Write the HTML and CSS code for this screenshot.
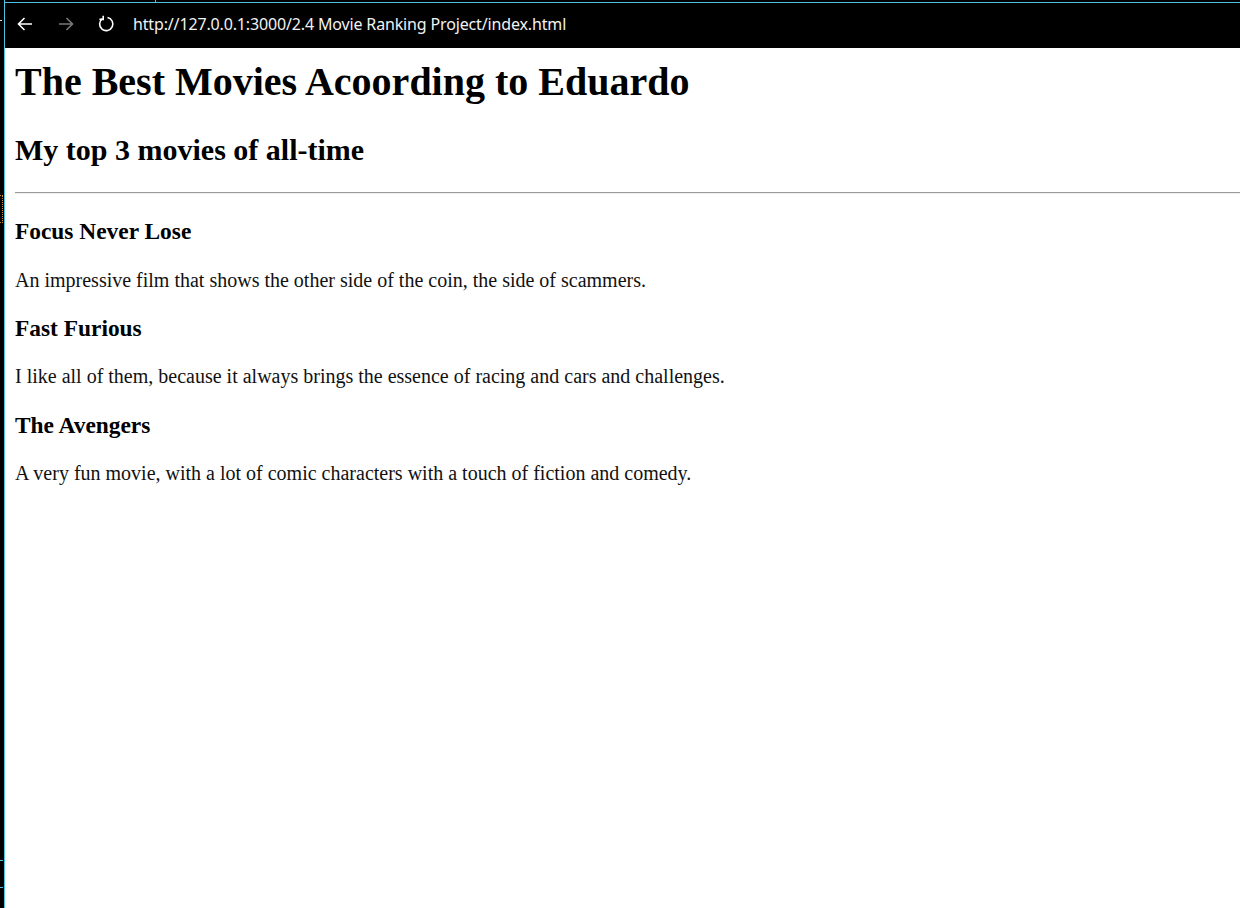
FILE: index.html
```html
<!DOCTYPE html>
<html>
<head>
<meta charset="utf-8">
<title>Movie Ranking</title>
<link rel="stylesheet" href="styles.css">
</head>
<body>
<div class="frame">
  <div class="edge">
    <span class="tick tick-a"></span>
    <span class="dotbox"></span>
    <span class="tick tick-b"></span>
    <span class="tick tick-c"></span>
  </div>
  <div class="window">
    <div class="toolbar">
      <div class="top-strip"><span class="top-mark"></span></div>
      <div class="bar">
        <svg class="icon back" width="18" height="18" viewBox="0 0 18 18"><path d="M16 9H2.5M8.5 3L2.5 9l6 6" fill="none" stroke="#fff" stroke-width="1.6"/></svg>
        <svg class="icon fwd" width="18" height="18" viewBox="0 0 18 18"><path d="M2 9h13.5M9.5 3l6 6-6 6" fill="none" stroke="#7a7a7a" stroke-width="1.6"/></svg>
        <svg class="icon reload" width="18" height="18" viewBox="0 0 18 18"><path d="M5.4 3.6A6.6 6.6 0 1 0 10.5 2.5" fill="none" stroke="#fff" stroke-width="1.6"/><path d="M6.2 0.8v3.6H2.4" fill="none" stroke="#fff" stroke-width="1.6"/></svg>
        <span class="url">http://127.0.0.1:3000/2.4 Movie Ranking Project/index.html</span>
      </div>
    </div>
    <div class="page">
      <h1 class="title">The Best Movies Acoording to Eduardo</h1>
      <h2 class="subtitle">My top 3 movies of all-time</h2>
      <hr class="rule">
      <h3 class="movie">Focus Never Lose</h3>
      <p class="desc">An impressive film that shows the other side of the coin, the side of scammers.</p>
      <h3 class="movie">Fast Furious</h3>
      <p class="desc">I like all of them, because it always brings the essence of racing and cars and challenges.</p>
      <h3 class="movie">The Avengers</h3>
      <p class="desc">A very fun movie, with a lot of comic characters with a touch of fiction and comedy.</p>
    </div>
  </div>
</div>
</body>
</html>
```

FILE: styles.css
```css
html, body {
  margin: 0;
  padding: 0;
  background: #fff;
  width: 1240px;
  height: 908px;
  overflow: hidden;
}

.frame {
  display: flex;
  width: 1240px;
  height: 908px;
}

.edge {
  position: relative;
  width: 4px;
  flex: none;
  background: #000;
  border-right: 1px solid #4cc2e6;
}

.tick {
  position: absolute;
  left: 0;
  width: 3px;
  height: 1px;
  background: #4cc2e6;
}
.tick-a { top: 20px; background: #ddd; width: 2px; }
.tick-b { top: 860px; }
.tick-c { top: 887px; }

.dotbox {
  position: absolute;
  left: 0;
  top: 195px;
  width: 2px;
  height: 26px;
  border: 1px dotted #d98a2a;
  border-left: none;
}

.window {
  flex: 1;
  display: flex;
  flex-direction: column;
  min-width: 0;
}

.toolbar {
  background: #000;
  height: 48px;
  flex: none;
}

.top-strip {
  position: relative;
  height: 2px;
  border-bottom: 1px solid #4cc2e6;
}

.top-mark {
  position: absolute;
  left: 150px;
  top: 0;
  width: 1px;
  height: 2px;
  background: #4cc2e6;
}

.bar {
  display: flex;
  align-items: center;
  height: 44px;
  padding-left: 11px;
}

.icon { flex: none; display: block; }
.back { margin-right: 23px; margin-top: -2px; }
.fwd { margin-right: 22px; margin-top: -2px; }
.reload { margin-right: 18px; margin-top: -2px; }

.url {
  font-family: "Noto Sans", "Open Sans", sans-serif;
  font-size: 16px;
  color: #f2f2f2;
  white-space: nowrap;
  letter-spacing: -0.15px;
  margin-top: -3px;
}

.page {
  flex: 1;
  padding: 0 10px;
  font-family: "Liberation Serif", "Times New Roman", serif;
  color: #000;
  overflow: hidden;
}

.title {
  font-size: 40px;
  font-weight: bold;
  margin: 10px 0 26.8px;
  white-space: nowrap;
}

.subtitle {
  font-size: 30px;
  font-weight: bold;
  margin: 27.8px 0 24.9px;
  white-space: nowrap;
}

.rule {
  margin: 0 -20px 24.6px 0;
  border: none;
  border-top: 1px solid #9a9a9a;
  border-bottom: 1px solid #eeeeee;
  height: 0;
}

.movie {
  font-size: 23.4px;
  font-weight: bold;
  margin: 23.4px 0;
  white-space: nowrap;
}

.desc {
  font-size: 20px;
  margin: 20px 0;
  white-space: nowrap;
  color: #111;
}
```
